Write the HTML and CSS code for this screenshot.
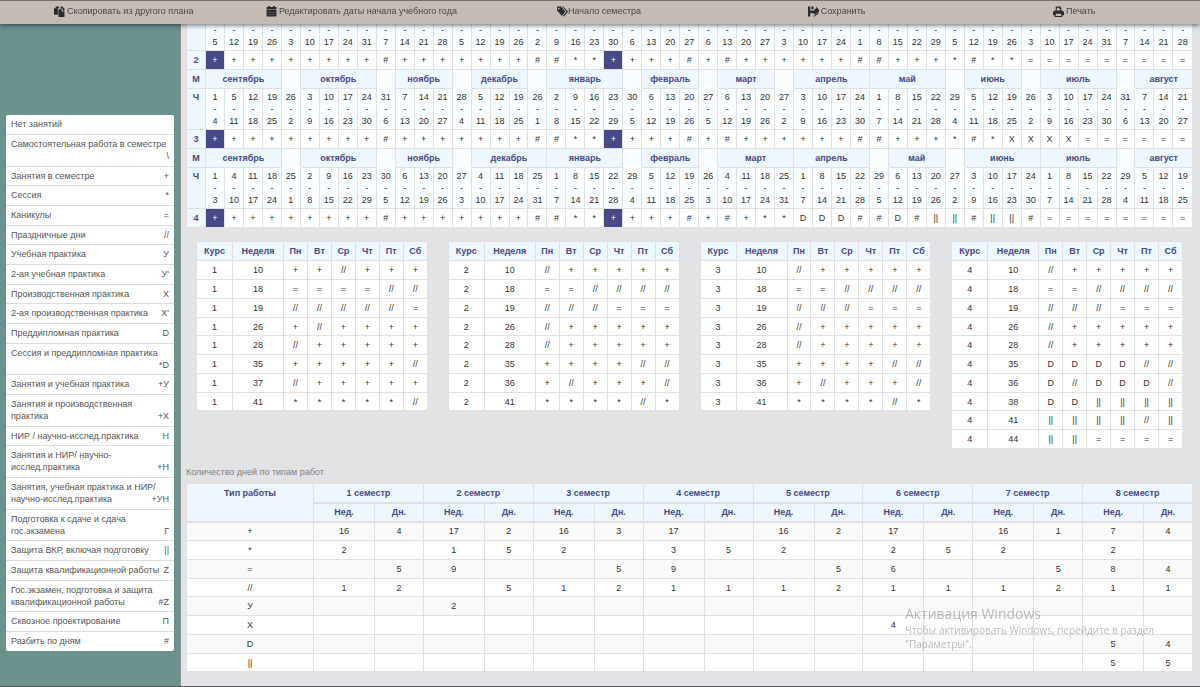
FILE: index.html
```html
<!DOCTYPE html>
<html lang="ru">
<head>
<meta charset="utf-8">
<title>График учебного процесса</title>
<link rel="stylesheet" href="styles.css">
</head>
<body>
<header class="toolbar">
  <button type="button" class="tool"><svg class="icon" viewBox="0 0 20 20"><path d="M0 4h3V1h6v3H7v12H0zM8 6h6v4h5v10H8zM12 1h3l4 4v4h-3V5h-4z"/></svg> Скопировать из другого плана</button>
  <button type="button" class="tool"><svg class="icon" viewBox="0 0 20 20"><path d="M1 2h3V0h3v2h6V0h3v2h3v4H1zM1 7h18v12H1z"/><path class="cut" d="M3 11h14v1H3zM3 15h14v1H3z"/></svg> Редактировать даты начала учебного года</button>
  <button type="button" class="tool tool-tight"><svg class="icon" viewBox="0 0 20 20"><path fill-rule="evenodd" d="M0 1h7l8 9-6 8L0 8zM3 3a1.500 1.500 0 1 0 .1 0z"/><path d="M9 1h2l9 9-7 9-2-1 6-8z"/></svg>Начало семестра</button>
  <button type="button" class="tool"><svg class="icon" viewBox="0 0 20 20"><path d="M0 1h4v7h8V5h3V1l5 6v3l-7 6-3-3H4v6H0zM6 1h4v5H6zM9 17l2 1 8-6v2l-7 5-3-1z"/></svg> Сохранить</button>
  <button type="button" class="tool"><svg class="icon" viewBox="0 0 20 20"><path fill-rule="evenodd" d="M5 1h8l2 2v5h2l3 3v6h-3v3H3v-3H0v-6l3-3h2zM7 3v5h6V5h-2V3zM5 14v4h10v-4z"/></svg> Печать</button>
</header>
<div class="layout">
  <aside class="sidebar"><div class="legend" id="legend"></div></aside>
  <main class="content">
    <table class="grid calendar"><colgroup><col class="col-label"><col span="52"></colgroup><tbody id="calendar"></tbody></table>
    <div class="days" id="days"></div>
    <h2 class="caption">Количество дней по типам работ</h2>
    <table class="grid stats"><colgroup id="stat-cols"><col class="col-type"></colgroup><thead id="stat-head"></thead><tbody id="stat-body"></tbody></table>
  </main>
</div>
<div class="watermark">
  <p class="watermark-title">Активация Windows</p>
  <p class="watermark-text">Чтобы активировать Windows, перейдите в раздел "Параметры".</p>
</div>
<script src="app.js"></script>
</body>
</html>
```

FILE: styles.css
```css
* { box-sizing: border-box; }

body {
  margin: 0;
  background: #e3e3e5;
  color: #333;
  font: 9px/12px "Liberation Sans", Arial, sans-serif;
}

button {
  border: 0;
  color: inherit;
  font: inherit;
  cursor: pointer;
}

/* Toolbar */
.toolbar {
  position: fixed;
  inset: 0 0 auto;
  z-index: 2;
  display: grid;
  grid-template-columns: repeat(5, 1fr);
  padding: 0 7px 0 5px;
  border-top: 1px solid #77716e;
  background: #c4bbb4;
  box-shadow: 0 1px 5px rgba(0, 0, 0, .6);
}

.tool {
  display: flex;
  align-items: center;
  justify-content: center;
  gap: 2px;
  padding: 4px 0 7px;
  background: none;
  color: #484644;
}

.tool-tight { gap: 0; }

.icon {
  width: 11px;
  height: 11px;
  fill: #2b2b2b;
}

.icon .cut { fill: #77716e; }

/* Layout */
.layout {
  display: grid;
  grid-template-columns: 181px 1fr;
  min-height: 100vh;
  border-bottom: 1px solid #5c5c60;
}

.sidebar {
  padding: 115px 6px 0;
  border-right: 1px solid #918f94;
  background: #6c918d;
}

.legend {
  overflow: hidden;
  border-radius: 3px;
  background: #fff;
}

.legend-item {
  display: block;
  width: 100%;
  padding: 3px 5px 4px;
  border-bottom: 1px solid #dcdcdc;
  background: #fff;
  color: #555;
  text-align: left;
}

.legend-item:nth-child(3n) { padding-bottom: 3px; }
.legend-item:last-child { border-bottom: 0; }

.legend-code {
  float: right;
  margin-left: 3px;
}

.content {
  min-width: 0;
  padding: 9px 7px 13px 5px;
}

/* Tables */
.grid {
  width: 100%;
  border-collapse: collapse;
  table-layout: fixed;
  background: #fff;
  text-align: center;
}

.grid th,
.grid td {
  height: 19px;
  padding: 0;
  border: 1px solid #dee0e2;
}

.grid th {
  background: #eef7ff;
  color: #474a87;
}

.col-label { width: 19px; }

.calendar .dates > * {
  height: 41px;
  padding: 2px 0;
  vertical-align: top;
}

.calendar .dates td { background: #f9fdff; }
.calendar .gap { border-bottom-color: #f9fdff; background: #f9fdff; }
.calendar .start { background: #474a87; color: #fff; }

.days {
  display: grid;
  grid-template-columns: repeat(4, 1fr);
  align-items: start;
  gap: 20px;
  padding: 13px 10px 0;
}

.days tr:nth-child(4n) td,
.stats tbody tr:nth-child(4n) td { height: 18px; }

.col-course { width: 36px; }
.col-week { width: 51px; }

.caption {
  margin: 17px 0 5px;
  color: #808080;
  font-size: 9px;
  font-weight: normal;
}

.stats thead th { border-bottom-width: 2px; }
.stats .type { padding-top: 3px; vertical-align: top; }
.stats tbody tr:nth-child(odd) { background: #f9f9f9; }
.col-type { width: 127px; }
.col-weeks { width: 61px; }

/* System notice over the page */
.watermark {
  position: fixed;
  right: 20px;
  bottom: 36px;
  z-index: 3;
  width: 275px;
  color: rgba(120, 120, 120, .5);
  font-family: "Open Sans", "Noto Sans", sans-serif;
  pointer-events: none;
}

.watermark p { margin: 0; }
.watermark-title { font-size: 14px; line-height: 18px; }
.watermark-text { font-size: 10px; line-height: 14px; }
```

FILE: app.js
```js
const byId = (id) => document.getElementById(id);

const legend = [
  ['Нет занятий', ''], ['Самостоятельная работа в семестре', '\\'],
  ['Занятия в семестре', '+'], ['Сессия', '*'], ['Каникулы', '='],
  ['Праздничные дни', '//'], ['Учебная практика', 'У'],
  ['2-ая учебная практика', "У'"], ['Производственная практика', 'Х'],
  ['2-ая производственная практика', "Х'"], ['Преддипломная практика', 'D'],
  ['Сессия и преддипломная практика', '*D'], ['Занятия и учебная практика', '+У'],
  ['Занятия и производственная практика', '+Х'], ['НИР / научно-исслед.практика', 'Н'],
  ['Занятия и НИР/ научно-исслед.практика', '+Н'],
  ['Занятия, учебная практика и НИР/ научно-исслед.практика', '+УН'],
  ['Подготовка к сдаче и сдача гос.экзамена', 'Г'],
  ['Защита ВКР, включая подготовку', '||'], ['Защита квалификационной работы', 'Z'],
  ['Гос.экзамен, подготовка и защита квалификационной работы', '#Z'],
  ['Сквозное проектирование', 'П'], ['Разбить по дням', '#'],
];
byId('legend').innerHTML = legend.map(([name, code]) =>
  `<button type="button" class="legend-item">${name} <span class="legend-code">${code}</span></button>`).join('');

const monthNames = ['сентябрь', 'октябрь', 'ноябрь', 'декабрь', 'январь', 'февраль',
  'март', 'апрель', 'май', 'июнь', 'июль', 'август'];

/* months: weeks inside each month; gaps: 1 where a week is shared with the next month */
const years = [
  { course: 2, from: 2021,
    marks: '+ + + + + + + + + # + + + + + + + # # * * + + + + # + # + + + + + + # # + + + * # * * = = = = = = = = =' },
  { course: 3, from: 2022, months: [4, 4, 3, 3, 4, 3, 3, 4, 4, 3, 4, 3], gaps: [1, 1, 1, 1, 1, 1, 1, 0, 1, 1, 1, 0],
    marks: '+ + + + + + + + + # + + + + + + + # # * * + + + + # + # + + + + + + # # + + + * # * Х Х Х Х = = = = = =' },
  { course: 4, from: 2023, months: [4, 4, 3, 4, 4, 3, 4, 4, 3, 4, 4, 3], gaps: [1, 1, 1, 0, 1, 1, 0, 1, 1, 0, 1, 0],
    marks: '+ + + + + + + + + # + + + + + + + # # * * + + + + # + # + * * D D D # # D # || || # || || # = = = = = = = =' },
];

/* The first course sits under the toolbar, so only its end dates are listed */
function weeks(year, withStart) {
  const cells = [];
  const start = new Date(Date.UTC(year, 8, 1));
  while (cells.length < 52) {
    const end = new Date(start);
    end.setUTCDate(end.getUTCDate() + (7 - end.getUTCDay()) % 7);
    cells.push(`<td>${withStart ? start.getUTCDate() : ''}<br>-<br>${end.getUTCDate()}</td>`);
    start.setTime(end.getTime());
    start.setUTCDate(start.getUTCDate() + 1);
  }
  return cells.join('');
}

byId('calendar').innerHTML = years.map((y) => {
  const months = y.months ? `<tr><th>М</th>${y.months.map((n, i) =>
    `<th colspan="${n}">${monthNames[i]}</th>${y.gaps[i] ? '<td class="gap"></td>' : ''}`).join('')}</tr>` : '';
  const marks = y.marks.split(' ').map((m, i) =>
    `<td${i === 0 || i === 21 ? ' class="start"' : ''}>${m}</td>`).join('');
  return `${months}<tr class="dates"><th>${y.months ? 'Ч' : ''}</th>${weeks(y.from, Boolean(y.months))}</tr><tr><th>${y.course}</th>${marks}</tr>`;
}).join('');

const days = [
  ['10 + + // + + +', '18 = = = = // //', '19 // // // // // =', '26 + // + + + +',
    '28 // + + + + +', '35 + + + + + //', '37 // + + + + +', '41 * * * * * //'],
  ['10 // + + + + +', '18 = = // // // //', '19 // // // = = =', '26 // + + + + +',
    '28 // + + + + +', '35 + + + + // //', '36 + // + + + //', '41 * * * * // *'],
  ['10 // + + + + +', '18 = = // // // //', '19 // // // = = =', '26 // + + + + +',
    '28 // + + + + +', '35 + + + + // //', '36 + // + + + //', '41 * * * * // *'],
  ['10 // + + + + +', '18 = = // // // //', '19 // // // = = =', '26 // + + + + +',
    '28 // + + + + +', '35 D D D D // //', '36 D // D D D //', '38 D D || || || ||',
    '41 || || || || // ||', '44 || || = = = ='],
];
byId('days').innerHTML = days.map((rows, i) => `<table class="grid">
  <colgroup><col class="col-course"><col class="col-week"><col span="6"></colgroup>
  <thead><tr>${['Курс', 'Неделя', 'Пн', 'Вт', 'Ср', 'Чт', 'Пт', 'Сб'].map((h) => `<th>${h}</th>`).join('')}</tr></thead>
  <tbody>${rows.map((r) => `<tr><td>${i + 1}</td>${r.split(' ').map((c) => `<td>${c}</td>`).join('')}</tr>`).join('')}</tbody>
</table>`).join('');

const terms = [1, 2, 3, 4, 5, 6, 7, 8];
byId('stat-cols').innerHTML += terms.map(() => '<col class="col-weeks"><col>').join('');
byId('stat-head').innerHTML =
  `<tr><th class="type" rowspan="2">Тип работы</th>${terms.map((n) => `<th colspan="2">${n} семестр</th>`).join('')}</tr>
   <tr>${terms.map(() => '<th>Нед.</th><th>Дн.</th>').join('')}</tr>`;

const stats = [
  '+,16,4,17,2,16,3,17,,16,2,17,,16,1,7,4',
  '*,2,,1,5,2,,3,5,2,,2,5,2,,2,',
  '=,,5,9,,,5,9,,,5,6,,,5,8,4',
  '//,1,2,,5,1,2,1,1,1,2,1,1,1,2,1,1',
  'У,,,2,,,,,,,,,,,,,',
  'Х,,,,,,,,,,,4,,,,,',
  'D,,,,,,,,,,,,,,,5,4',
  '||,,,,,,,,,,,,,,,5,5',
];
byId('stat-body').innerHTML = stats.map((r) =>
  `<tr>${r.split(',').map((c) => `<td>${c}</td>`).join('')}</tr>`).join('');
```
